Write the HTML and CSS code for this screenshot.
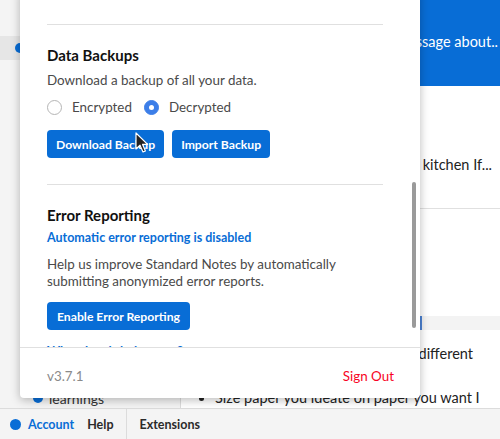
FILE: index.html
```html
<!DOCTYPE html>
<html>
<head>
<meta charset="utf-8">
<link rel="stylesheet" href="styles.css">
</head>
<body>
<div class="app">
  <div class="workspace">
    <aside class="sidebar">
      <div class="tag selected"><span class="tag-dot"></span><span>Notes</span></div>
      <div class="tag learn"><span class="tag-dot"></span><span>learnings</span></div>
    </aside>
    <main class="notes">
      <div class="note active"><p class="preview">An important message about..</p></div>
      <div class="note second"><p class="preview">Clean out your kitchen If...</p></div>
      <div class="hl-row"></div>
      <p class="line-right">Breaking notes into different</p>
      <ul class="bullets"><li>Size paper you ideate on paper you want I</li></ul>
    </main>
  </div>
  <footer class="statusbar">
    <div class="status-group">
      <span class="status-dot"></span>
      <span class="status-item account">Account</span>
      <span class="status-item">Help</span>
    </div>
    <div class="status-group sep">
      <span class="status-item">Extensions</span>
    </div>
  </footer>
</div>

<div class="modal">
  <div class="scroll">
    <p class="desc lead">Sync your data privately everywhere, on any device.</p>
    <div class="divider"></div>
    <section class="section">
      <h3 class="title">Data Backups</h3>
      <p class="desc">Download a backup of all your data.</p>
      <div class="radios">
        <label class="radio"><span class="radio-circle"></span>Encrypted</label>
        <label class="radio"><span class="radio-circle on"></span>Decrypted</label>
      </div>
      <div class="buttons">
        <button class="btn">Download Backup</button>
        <button class="btn">Import Backup</button>
      </div>
    </section>
    <div class="divider"></div>
    <section class="section">
      <h3 class="title">Error Reporting</h3>
      <p class="status-link">Automatic error reporting is disabled</p>
      <p class="desc para">Help us improve Standard Notes by automatically submitting anonymized error reports.</p>
      <div class="buttons">
        <button class="btn">Enable Error Reporting</button>
      </div>
      <p class="more-link">What data is being sent?</p>
    </section>
    <div class="thumb"></div>
  </div>
  <div class="modal-footer">
    <span class="version">v3.7.1</span>
    <span class="signout">Sign Out</span>
  </div>
</div>

<svg class="cursor" width="14" height="22" viewBox="0 0 14 22">
  <path d="M1 1 L1 17 L5 13.2 L8 20 L10.4 19 L7.6 12.4 L12.6 12.4 Z" fill="#222" stroke="#fff" stroke-width="1.2" stroke-linejoin="round"/>
</svg>
</body>
</html>
```
FILE: styles.css
```css
* { box-sizing: border-box; }
html, body {
  margin: 0;
  padding: 0;
  width: 500px;
  height: 439px;
  overflow: hidden;
  font-family: "Lato", "Noto Sans", sans-serif;
  color: #222;
}
p { margin: 0; }

.app {
  display: flex;
  flex-direction: column;
  height: 439px;
}
.workspace {
  flex: 1;
  display: flex;
  min-height: 0;
}
.sidebar {
  width: 181px;
  background: #f4f4f4;
  border-right: 1px solid #dcdcdc;
  display: flex;
  flex-direction: column;
  padding-top: 36px;
}
.tag {
  display: flex;
  align-items: center;
  height: 24px;
  padding-left: 15px;
  gap: 6px;
  font-size: 14px;
  color: #333;
}
.tag.selected { background: #e6e6e6; }
.tag-dot {
  width: 10px;
  height: 10px;
  border-radius: 50%;
  background: #086dd6;
  flex: none;
}
.tag.learn {
  margin-top: auto;
  height: 20px;
  padding-left: 33px;
}
.notes {
  flex: 1;
  background: #fff;
  display: flex;
  flex-direction: column;
  overflow: hidden;
}
.note {
  font-size: 14.5px;
  line-height: 20px;
}
.note.active {
  height: 86px;
  background: #086dd6;
  color: #fff;
  padding-top: 32px;
}
.note.second {
  height: 123px;
  border-bottom: 1px solid #e0e0e0;
  padding-top: 69px;
  color: #222;
}
.preview {
  white-space: nowrap;
  text-align: right;
  padding-right: 2px;
}
.note.second .preview { padding-right: 8px; }
.hl-row {
  margin-top: 107px;
  margin-left: 239px;
  height: 14px;
  background: #f3f3f3;
  border-left: 2px solid #4c83d4;
}
.line-right {
  margin-top: 14px;
  font-size: 14.5px;
  line-height: 20px;
  text-align: right;
  padding-right: 27px;
  white-space: nowrap;
}
.bullets {
  margin: auto 0 0;
  padding-left: 34px;
  font-size: 14.5px;
  line-height: 20px;
  white-space: nowrap;
}

.statusbar {
  height: 31px;
  flex: none;
  background: #f4f4f4;
  border-top: 1px solid #dcdcdc;
  display: flex;
  align-items: stretch;
  font-size: 12.5px;
  font-weight: 700;
}
.status-group {
  display: flex;
  align-items: center;
  padding-left: 10px;
  padding-right: 12px;
  gap: 13px;
}
.status-group.sep {
  border-left: 1px solid #dcdcdc;
  padding-left: 13px;
}
.status-dot {
  width: 11px;
  height: 11px;
  border-radius: 50%;
  background: #086dd6;
  margin-right: -6px;
}
.status-item { color: #2b2b2b; }
.status-item.account { color: #086dd6; }

.modal {
  position: absolute;
  left: 20px;
  top: -10px;
  width: 400px;
  height: 408px;
  background: #fff;
  border-radius: 4px;
  box-shadow: 0 2px 10px rgba(0,0,0,0.28);
  display: flex;
  flex-direction: column;
}
.scroll {
  flex: 1;
  position: relative;
  overflow: hidden;
  padding: 0 37px 0 27px;
}
.desc {
  font-size: 13.4px;
  line-height: 20px;
  color: #4a4a4a;
}
.desc.lead {
  margin-top: -9px;
  white-space: nowrap;
}
.lead + .divider { margin-top: 23px; }
.divider {
  height: 1px;
  background: #e0e0e0;
}
.section {
  padding: 20px 0 26px;
}
.title {
  margin: 0 0 5px;
  font-size: 15px;
  line-height: 20px;
  font-weight: 700;
  color: #111;
}
.radios {
  display: flex;
  align-items: center;
  height: 20px;
  margin-top: 7px;
  gap: 12px;
  font-size: 13.4px;
  color: #4a4a4a;
}
.radio {
  display: flex;
  align-items: center;
  gap: 10px;
}
.radio-circle {
  width: 15px;
  height: 15px;
  border-radius: 50%;
  border: 1px solid #b5b5b5;
  display: flex;
  align-items: center;
  justify-content: center;
}
.radio-circle.on {
  background: #3c7ee8;
  border-color: #3c7ee8;
}
.radio-circle.on::after {
  content: "";
  width: 5px;
  height: 5px;
  border-radius: 50%;
  background: #fff;
}
.buttons {
  display: flex;
  gap: 8px;
  margin-top: 13px;
}
.btn {
  height: 28px;
  padding: 0 9px;
  border: none;
  border-radius: 4px;
  background: #086dd6;
  color: #fff;
  font-family: inherit;
  font-size: 12.2px;
  font-weight: 700;
}
.status-link {
  margin-top: 2px;
  font-size: 12.5px;
  line-height: 16px;
  font-weight: 700;
  color: #086dd6;
}
.para {
  margin-top: 10px;
  line-height: 17px;
}
.para + .buttons { margin-top: 12px; }
.para + .buttons .btn { padding: 0 10px; }
.more-link {
  margin-top: 14px;
  font-size: 12.5px;
  line-height: 16px;
  font-weight: 700;
  color: #086dd6;
}
.thumb {
  position: absolute;
  right: 4px;
  top: 192px;
  width: 4px;
  height: 146px;
  border-radius: 2px;
  background: #9a9a9a;
}
.modal-footer {
  flex: none;
  border-top: 1px solid #e0e0e0;
  display: flex;
  justify-content: space-between;
  padding: 18px 26px 12px 27px;
  font-size: 13.4px;
  line-height: 20px;
}
.version { color: #8a8a8a; }
.signout { color: #f80324; }

.cursor {
  position: absolute;
  left: 135px;
  top: 132px;
}
```
